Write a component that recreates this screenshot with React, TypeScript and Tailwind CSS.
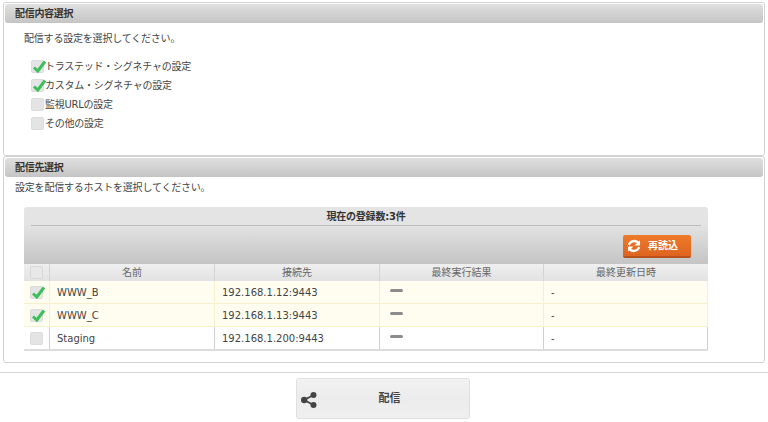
import React from "react";

const font = { fontFamily: '"DejaVu Sans","Noto Sans CJK JP",sans-serif' };

function Check() {
  return (
    <svg className="absolute left-0 -top-[1px]" width="15" height="14" viewBox="0 0 15 14">
      <path d="M2 7.5 L5.8 11 L13 1.5" fill="none" stroke="#3fbf5a" strokeWidth="3" strokeLinejoin="miter" />
    </svg>
  );
}

function Box({ on = false, cls = "" }: { on?: boolean; cls?: string }) {
  return (
    <span className={"relative block w-[13px] h-[13px] rounded-[2px] bg-[#e4e4e4] border border-[#dcdcdc] shrink-0 " + cls}>
      {on && <Check />}
    </span>
  );
}

function Header({ title }: { title: string }) {
  return (
    <div className="h-[19px] mx-[1px] pt-[2px] rounded-[3px] border-b border-[#c4c4c4] bg-gradient-to-b from-[#e0e0e0] to-[#c6c6c6] flex items-center pl-[10px] text-[10px] tracking-[-0.3px] font-bold text-[#333] leading-none">
      {title}
    </div>
  );
}

function Opt({ on, label }: { on?: boolean; label: string }) {
  return (
    <div className="flex items-center h-[19px] gap-[1px]">
      <Box on={on} />
      <span className="tracking-[-0.25px] pt-[1px]">{label}</span>
    </div>
  );
}

const cols = "grid grid-cols-[26px_165px_165px_164px_164px]";

function Row({ on, name, ip, last }: { on?: boolean; name: string; ip: string; last?: boolean }) {
  const bg = on ? "bg-[#fffdf0]" : "bg-white";
  const line = on ? "border-r border-[#f7f0cc]" : "border-r border-[#cfcfcf]";
  return (
    <div className={`${cols} text-[10px] text-[#444] items-stretch ${bg} ${on ? "h-[23px] border-b border-[#f7f0cc]" : ""} ${last ? "h-[24px] border-b-2 border-b-[#dcdcdc]" : ""}`}>
      <div className={`flex items-center pl-[6px] ${line}`}><Box on={on} /></div>
      <div className={`flex items-center pl-[7px] ${line}`}>{name}</div>
      <div className={`flex items-center pl-[7px] ${line}`}>{ip}</div>
      <div className={`flex items-center pl-[10px] pb-[3px] ${line}`}>
        <span className="block w-[13px] h-[3px] rounded-full bg-[#8c8c8c]" />
      </div>
      <div className={`flex items-center pl-[7px] ${line}`}>-</div>
    </div>
  );
}

export default function App() {
  return (
    <div className="w-[768px] h-[422px] bg-white overflow-hidden text-[#444]" style={font}>
      <div className="pt-[2px] px-[3px]">
        <section className="h-[154px] border border-[#d2d2d2] rounded-[3px] pt-[1px]">
          <Header title="配信内容選択" />
          <p className="text-[10px] leading-none pl-[20px] pt-[11px] tracking-[-0.2px]">配信する設定を選択してください。</p>
          <div className="pl-[27px] pt-[13px] text-[10px] leading-none">
            <Opt on label="トラステッド・シグネチャの設定" />
            <Opt on label="カスタム・シグネチャの設定" />
            <Opt label="監視URLの設定" />
            <Opt label="その他の設定" />
          </div>
        </section>
        <section className="h-[207px] border border-[#d2d2d2] rounded-[3px] pt-[1px]">
          <Header title="配信先選択" />
          <p className="text-[10px] leading-none pl-[11px] pt-[6px] tracking-[-0.2px]">設定を配信するホストを選択してください。</p>
          <div className="w-[684px] ml-[20px] mt-[14px]">
            <div className="h-[57px] rounded-t-[3px] bg-gradient-to-b from-[#e4e4e4] from-30% to-[#c4c4c4] px-[7px]">
              <div className="h-[19px] pt-[2px] border-b border-[#bdbdbd] flex items-center justify-center text-[10px] font-bold text-[#333] leading-none tracking-[-0.2px]">
                現在の登録数:3件
              </div>
              <div className="flex justify-end pt-[9px] pr-[10px]">
                <div className="w-[68px] h-[23px] rounded-[2px] border-b-2 border-[#b9521a] bg-gradient-to-b from-[#ee7a2a] to-[#de6420] flex items-center pl-[4px] gap-[7px] text-white text-[10px] font-bold leading-none">
                  <svg width="14" height="14" viewBox="0 0 24 24" fill="none" stroke="white" strokeWidth="4">
                    <path d="M21 9A9.5 9.5 0 0 0 4.5 7.5L3 10" />
                    <path d="M3 15A9.5 9.5 0 0 0 19.5 16.5L21 14" />
                    <path d="M22 2v9h-9z" fill="white" stroke="none" />
                    <path d="M2 22v-9h9z" fill="white" stroke="none" />
                  </svg>
                  <span>再読込</span>
                </div>
              </div>
            </div>
            <div className={`${cols} h-[17px] bg-gradient-to-b from-[#efefef] to-[#e2e2e2] text-[10px] text-[#666] leading-none`}>
              <div className="flex items-center pl-[6px] border-r border-[#d4d4d4]">
                <span className="block w-[13px] h-[13px] rounded-[2px] bg-[#e8e8e8] border border-[#d8d8d8]" />
              </div>
              <div className="flex items-center justify-center border-r border-[#d4d4d4]">名前</div>
              <div className="flex items-center justify-center border-r border-[#d4d4d4]">接続先</div>
              <div className="flex items-center justify-center border-r border-[#d4d4d4]">最終実行結果</div>
              <div className="flex items-center justify-center">最終更新日時</div>
            </div>
            <Row on name="WWW_B" ip="192.168.1.12:9443" />
            <Row on name="WWW_C" ip="192.168.1.13:9443" />
            <Row name="Staging" ip="192.168.1.200:9443" last />
          </div>
        </section>
      </div>
      <div className="mt-[9px] border-t border-[#d6d6d6] pt-[5px] flex justify-center pr-[2px]">
        <div className="relative w-[174px] h-[41px] rounded-[3px] border border-[#e0e0e0] bg-gradient-to-b from-[#f2f2f2] via-[#ececec] to-[#efefef] flex items-center justify-center text-[11px] font-bold text-[#444]">
          <svg className="absolute left-[4px] top-[13px]" width="16" height="16" viewBox="0 0 16 16" fill="#444">
            <circle cx="12.5" cy="3" r="3" />
            <circle cx="3.2" cy="8" r="3.2" />
            <circle cx="12.5" cy="13" r="3" />
            <path d="M3.2 8L12.5 3M3.2 8L12.5 13" stroke="#444" strokeWidth="1.8" />
          </svg>
          <span className="pl-[13px] pt-[2px]">配信</span>
        </div>
      </div>
    </div>
  );
}
